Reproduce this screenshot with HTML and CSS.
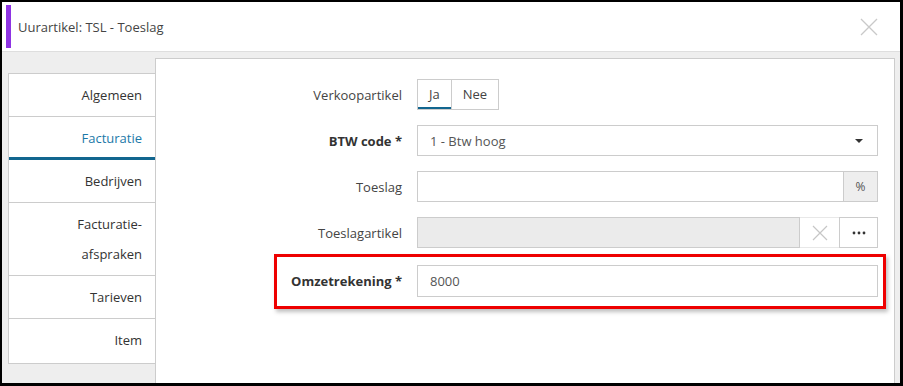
FILE: index.html
```html
<!DOCTYPE html>
<html lang="nl">
<head>
  <meta charset="UTF-8" />
  <title>Uurartikel: TSL - Toeslag</title>
  <link rel="stylesheet" href="styles.css">
</head>
<body>
  <div class="frame">
    <div class="header">
      <span class="accent"></span>
      <span class="title">Uurartikel: TSL - Toeslag</span>
      <svg class="close" width="18" height="18" viewBox="0 0 18 18">
        <path d="M1 1 L17 17 M17 1 L1 17" stroke="#c9c9c9" stroke-width="1.3" fill="none"/>
      </svg>
    </div>

    <div class="content">
      <ul class="tabs">
        <li>Algemeen</li>
        <li class="active">Facturatie</li>
        <li>Bedrijven</li>
        <li>Facturatie-<br />afspraken</li>
        <li>Tarieven</li>
        <li>Item</li>
      </ul>

      <div class="panel">
        <div class="row">
          <label>Verkoopartikel</label>
          <div class="toggle">
            <span class="on">Ja</span>
            <span>Nee</span>
          </div>
        </div>

        <div class="row">
          <label class="req">BTW code *</label>
          <div class="field select">
            <span class="value">1 - Btw hoog</span>
            <span class="caret"></span>
          </div>
        </div>

        <div class="row">
          <label>Toeslag</label>
          <div class="group">
            <div class="field"></div>
            <span class="addon">%</span>
          </div>
        </div>

        <div class="row">
          <label>Toeslagartikel</label>
          <div class="group">
            <div class="field disabled"></div>
            <span class="clear">
              <svg width="16" height="16" viewBox="0 0 16 16">
                <path d="M1 1 L15 15 M15 1 L1 15" stroke="#c6c6c6" stroke-width="1.2" fill="none"/>
              </svg>
            </span>
            <span class="more">
              <svg width="14" height="4" viewBox="0 0 14 4">
                <circle cx="2" cy="2" r="1.4" fill="#333"/>
                <circle cx="7" cy="2" r="1.4" fill="#333"/>
                <circle cx="12" cy="2" r="1.4" fill="#333"/>
              </svg>
            </span>
          </div>
        </div>

        <div class="row highlight">
          <label class="req">Omzetrekening *</label>
          <div class="field tall"><span class="value">8000</span></div>
        </div>
      </div>
    </div>
  </div>
</body>
</html>
```

FILE: styles.css
```css
body {
  margin: 0;
  font-family: "Open Sans", "Liberation Sans", sans-serif;
  font-size: 13px;
  color: #444;
}

.frame {
  width: 903px;
  height: 386px;
  box-sizing: border-box;
  border-style: solid;
  border-color: #000;
  border-width: 2px 3px 3px 2px;
  display: flex;
  flex-direction: column;
  background: #fff;
}

/* header */
.header {
  height: 49px;
  border-bottom: 1px solid #dedede;
  display: flex;
  align-items: center;
  flex-shrink: 0;
}

.accent {
  width: 5px;
  height: 43px;
  margin-left: 4px;
  margin-top: -1px;
  background: #8e33e3;
}

.title {
  margin-left: 7px;
  color: #444;
}

.close {
  margin-left: auto;
  margin-right: 22px;
}

/* body */
.content {
  flex: 1;
  background: #eeeeee;
  display: flex;
  align-items: flex-start;
  padding: 6px 0 0 6px;
}

.tabs {
  list-style: none;
  margin: 15px 0 0 0;
  padding: 0;
  width: 146px;
  border: 1px solid #cccccc;
  border-right: none;
  background: #fff;
}

.tabs li {
  padding: 6px 13px 6px 0;
  line-height: 30px;
  text-align: right;
  color: #333;
  border-bottom: 1px solid #cccccc;
}

.tabs li:last-child {
  border-bottom: none;
  padding-bottom: 8px;
}

.tabs li.active {
  color: #1b78a8;
  padding-bottom: 4px;
  border-bottom: 3px solid #12668f;
}

.panel {
  flex: 1;
  align-self: stretch;
  margin-right: 5px;
  background: #fff;
  border: 1px solid #cccccc;
  border-bottom: none;
  padding: 20px 16px 0 0;
}

/* form rows */
.row {
  display: flex;
  align-items: center;
  gap: 15px;
}

.row + .row {
  margin-top: 15px;
}

.row label {
  width: 246px;
  flex-shrink: 0;
  text-align: right;
  color: #444;
}

.row label.req {
  font-weight: bold;
  color: #333;
}

.toggle {
  display: flex;
  height: 31px;
  box-sizing: border-box;
  border: 1px solid #cccccc;
}

.toggle span {
  padding: 0 11px;
  line-height: 29px;
  color: #444;
}

.toggle span + span {
  border-left: 1px solid #cccccc;
}

.toggle .on {
  box-shadow: inset 0 -2px 0 #12668f;
}

.field {
  flex: 1;
  height: 31px;
  box-sizing: border-box;
  border: 1px solid #cccccc;
  display: flex;
  align-items: center;
  padding: 0 12px;
  color: #555;
}

.field.tall {
  height: 32px;
}

.field.disabled {
  background: #ebebeb;
}

.select {
  justify-content: space-between;
}

.caret {
  width: 0;
  height: 0;
  border-left: 4px solid transparent;
  border-right: 4px solid transparent;
  border-top: 4px solid #333;
  margin-right: 2px;
}

.group {
  flex: 1;
  display: flex;
  height: 31px;
}

.addon {
  width: 34px;
  box-sizing: border-box;
  border: 1px solid #cccccc;
  border-left: none;
  background: #eeeeee;
  display: flex;
  align-items: center;
  justify-content: center;
  font-size: 12px;
  color: #555;
}

.clear {
  width: 39px;
  box-sizing: border-box;
  border-top: 1px solid #e8e8e8;
  border-bottom: 1px solid #e8e8e8;
  display: flex;
  align-items: center;
  justify-content: center;
}

.more {
  width: 39px;
  box-sizing: border-box;
  border: 1px solid #cccccc;
  display: flex;
  align-items: center;
  justify-content: center;
}

/* highlighted row */
.row.highlight {
  margin: 6px -8px 0 118px;
  border: 3px solid #ee0000;
  padding: 8px 5px 9px 12px;
  box-shadow: 2px 3px 4px rgba(0, 0, 0, 0.25);
}

.row.highlight label {
  width: 113px;
}
```
